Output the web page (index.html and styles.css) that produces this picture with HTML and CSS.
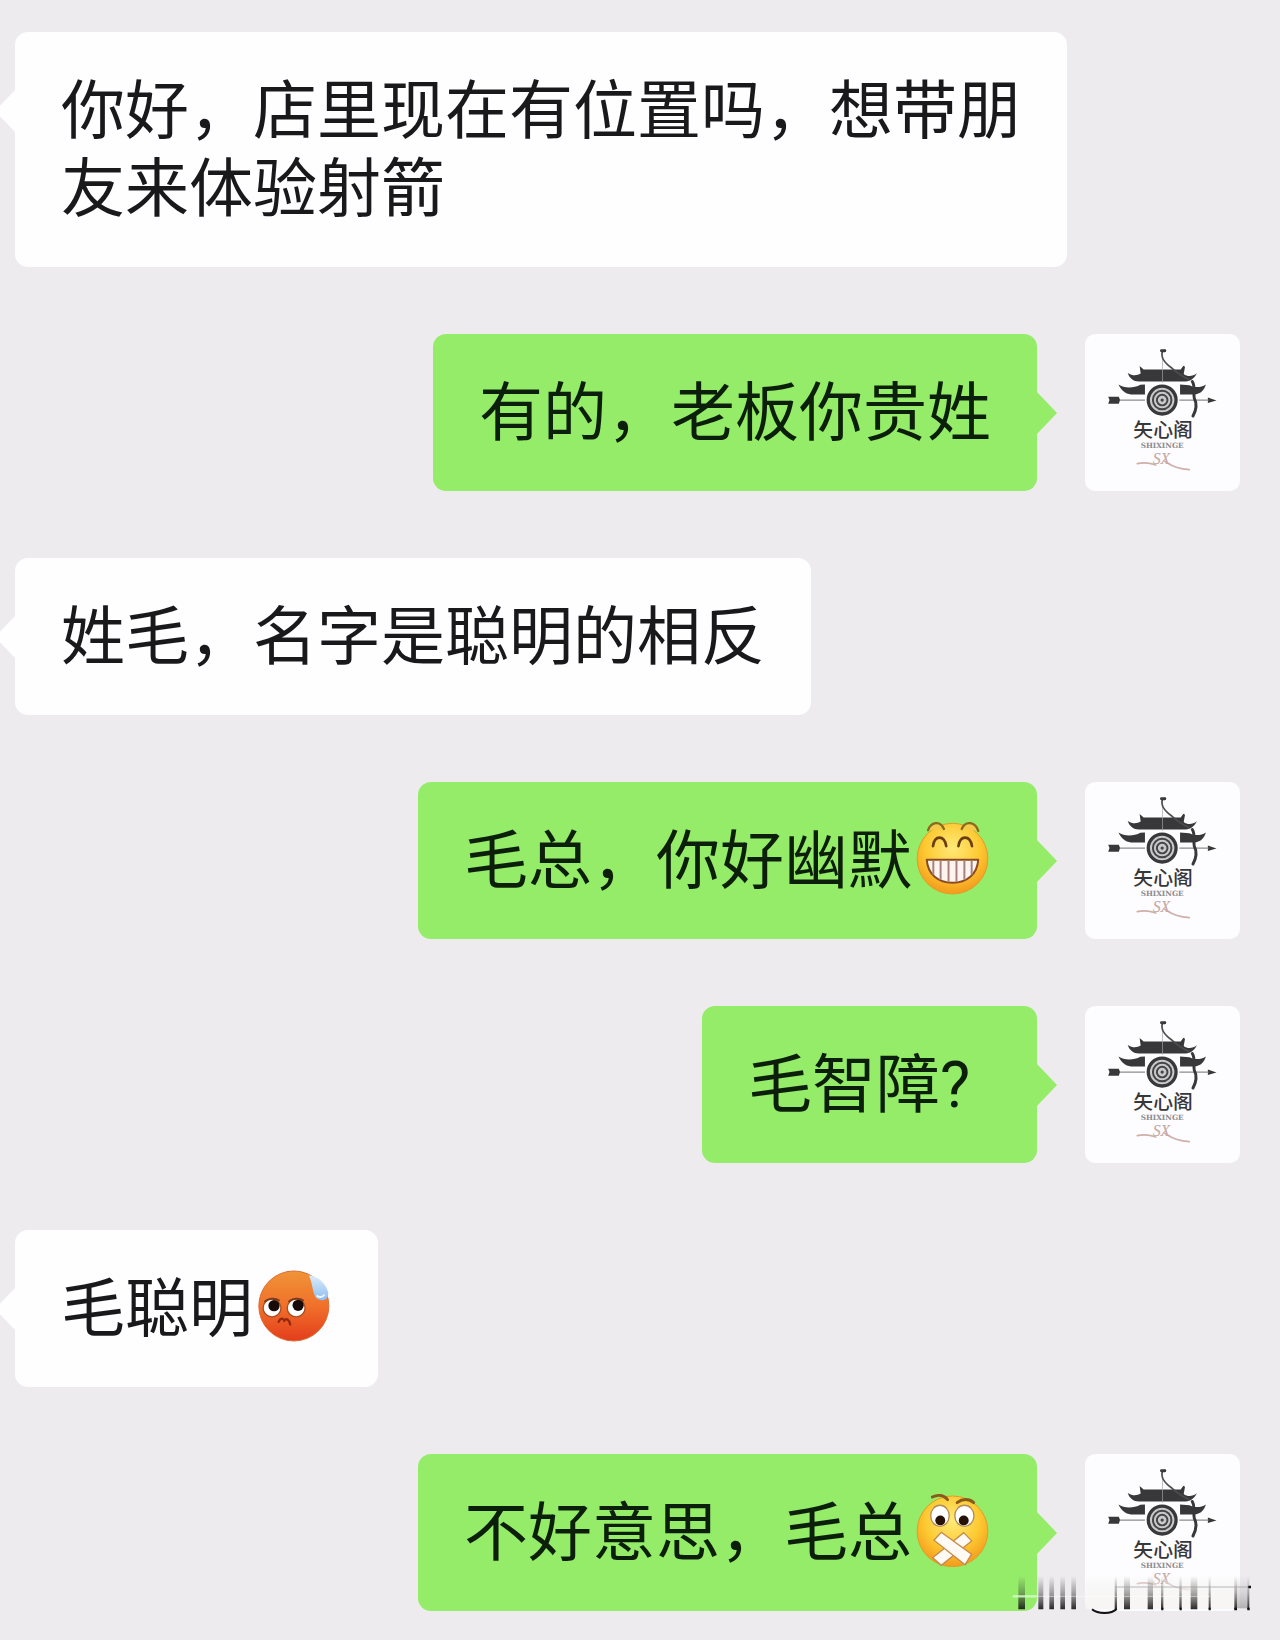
FILE: index.html
```html
<!DOCTYPE html>
<html lang="zh-CN">
<head>
<meta charset="utf-8">
<meta name="viewport" content="width=device-width, initial-scale=1">
<title>聊天</title>
<link rel="stylesheet" href="styles.css">
</head>
<body>
<svg class="defs" aria-hidden="true">
  <defs>
    <radialGradient id="yellow" cx="50%" cy="35%" r="65%">
      <stop offset="0" stop-color="#ffea78"/><stop offset=".6" stop-color="#fdc931"/><stop offset="1" stop-color="#f39a1c"/>
    </radialGradient>
    <linearGradient id="red" x1="0" y1="0" x2="0" y2="1">
      <stop offset="0" stop-color="#ef9438"/><stop offset=".5" stop-color="#f1702a"/><stop offset="1" stop-color="#e33d1c"/>
    </linearGradient>
    <linearGradient id="drop" x1="0" y1="0" x2="0" y2="1">
      <stop offset="0" stop-color="#dcecfa"/><stop offset="1" stop-color="#8dbdf0"/>
    </linearGradient>
    <linearGradient id="fade" x1="0" y1="0" x2="0" y2="1">
      <stop offset="0" stop-color="#333" stop-opacity="0"/><stop offset=".5" stop-color="#333" stop-opacity=".4"/><stop offset="1" stop-color="#111" stop-opacity=".9"/>
    </linearGradient>
    <linearGradient id="mist" x1="0" y1="0" x2="0" y2="1">
      <stop offset="0" stop-color="#f6f5f4" stop-opacity="0"/><stop offset=".4" stop-color="#f6f5f4" stop-opacity=".75"/><stop offset="1" stop-color="#f6f5f4" stop-opacity=".9"/>
    </linearGradient>
    <symbol id="emblem" viewBox="45 42 468 471">
      <g fill="#38373a">
        <path d="M210 137l12 11h112l8-12 5 3-4 22c12 10 28 7 40-2-8 16-20 24-34 25H208c-17-1-28-9-34-26 14 9 27 9 39 2z"/>
        <path d="M146 193c18 13 48 11 66 1l14-1v30h-42c-18-2-30-13-38-30zM410 193c-16 10-34 10-50 2l-28-2v30h45c18-2 28-14 33-30z"/>
        <path d="M115 230h32l4 10-4 11h-32l4-11zM416 232l26 9-26 8z"/>
      </g>
      <path d="M150 240h82M326 240h92" stroke="#8c8b8e" stroke-width="4"/>
      <path d="M279 90v104" stroke="#a6a5a8" stroke-width="2"/>
      <path d="M286 90c-8 0-10 8-8 18 2 15 16 26 30 36l22 18 28 16" fill="none" stroke="#4c4b4e" stroke-width="5" stroke-linecap="round"/>
      <path d="M276 91h10M369 184c10 16 2 32 6 50 8 16 7 34-4 54" fill="none" stroke="#38373a" stroke-width="9" stroke-linecap="round"/>
      <circle cx="278" cy="240" r="52" fill="#fff"/>
      <circle cx="278" cy="240" r="42" fill="#c9c8ca" stroke="#38373a" stroke-width="10"/>
      <circle cx="278" cy="240" r="28" fill="none" stroke="#454447" stroke-width="6"/>
      <circle cx="278" cy="240" r="16" fill="none" stroke="#454447" stroke-width="6"/>
      <circle cx="278" cy="240" r="5" fill="#454447"/>
      <path d="M203 432c22-5 38-2 56 4M282 424c14 2 18 22 78 26" fill="none" stroke="#cdb0a9" stroke-width="5" stroke-linecap="round"/>
    </symbol>
  </defs>
</svg>
<main class="chat">
  <section class="row">
    <p class="bubble theirs">你好，店里现在有位置吗，想带朋友来体验射箭</p>
  </section>
  <section class="row own">
    <p class="bubble mine">有的，老板你贵姓</p>
    <svg class="avatar" viewBox="45 42 468 471"><use href="#emblem" x="45" y="42" width="468" height="471"/><text class="brand" x="281" y="352">矢心阁</text><text class="latin" x="278" y="384">SHIXINGE</text><text class="script" x="276" y="434">SX</text></svg>
  </section>
  <section class="row">
    <p class="bubble theirs">姓毛，名字是聪明的相反</p>
  </section>
  <section class="row own">
    <p class="bubble mine">毛总，你好幽默<svg class="emoji" viewBox="46 68 220 224" role="img" aria-label="呲牙">
      <circle cx="156" cy="182" r="107" fill="url(#yellow)" stroke="#e69a25" stroke-width="3"/>
      <path d="M82 96c8-24 36-32 48-4M184 92c12-28 42-20 50 6" fill="#f5c94a" stroke="#8a6a1c" stroke-width="7" stroke-linecap="round"/>
      <path d="M97 144c5-34 34-34 40 0M174 144c5-34 35-34 41 0" fill="none" stroke="#6b3d12" stroke-width="8" stroke-linecap="round"/>
      <path d="M78 185h156c-3 45-35 70-78 70s-75-25-78-70z" fill="#fff4ef" stroke="#8d4a20" stroke-width="6" stroke-linejoin="round"/>
      <path d="M98 188v43M120 188v58M144 188v64M168 188v64M192 188v58M214 188v42" stroke="#a5827e" stroke-width="6"/>
    </svg></p>
    <svg class="avatar" viewBox="45 42 468 471"><use href="#emblem" x="45" y="42" width="468" height="471"/><text class="brand" x="281" y="352">矢心阁</text><text class="latin" x="278" y="384">SHIXINGE</text><text class="script" x="276" y="434">SX</text></svg>
  </section>
  <section class="row own">
    <p class="bubble mine">毛智障<span class="mark">?</span></p>
    <svg class="avatar" viewBox="45 42 468 471"><use href="#emblem" x="45" y="42" width="468" height="471"/><text class="brand" x="281" y="352">矢心阁</text><text class="latin" x="278" y="384">SHIXINGE</text><text class="script" x="276" y="434">SX</text></svg>
  </section>
  <section class="row">
    <p class="bubble theirs">毛聪明<svg class="emoji" viewBox="48 62 220 224" role="img" aria-label="囧">
      <circle cx="159" cy="174" r="106" fill="url(#red)" stroke="#dc6b30" stroke-width="3"/>
      <circle cx="93" cy="180" r="27" fill="#fff" stroke="#a84e22" stroke-width="4"/>
      <circle cx="166" cy="180" r="27" fill="#fff" stroke="#a84e22" stroke-width="4"/>
      <circle cx="99" cy="173" r="17" fill="#160b08"/><circle cx="172" cy="172" r="17" fill="#160b08"/>
      <path d="M70 162c10-12 32-14 46-4M143 162c10-12 32-14 46-4" fill="none" stroke="#7a3a1b" stroke-width="5"/>
      <path d="M113 222c6-13 13-12 17-4 6-8 14-4 18 12" fill="none" stroke="#942711" stroke-width="7" stroke-linecap="round"/>
      <path d="M205 82c26 2 50 22 58 50 2 18-10 27-24 24-24-4-18-34-34-74z" fill="url(#drop)"/>
      <path d="M228 142c8 8 18 6 24-3" fill="none" stroke="#e9f4ff" stroke-width="6"/>
    </svg></p>
  </section>
  <section class="row own">
    <p class="bubble mine">不好意思，毛总<svg class="emoji" viewBox="46 68 220 224" role="img" aria-label="闭嘴">
      <circle cx="156" cy="184" r="107" fill="url(#yellow)" stroke="#e69a25" stroke-width="3"/>
      <path d="M95 80c16-8 34-6 46 8M170 97c16-12 36-12 50 0" fill="none" stroke="#8b5a1b" stroke-width="9" stroke-linecap="round"/>
      <ellipse cx="118" cy="137" rx="28" ry="32" fill="#fff" stroke="#b48b55" stroke-width="4"/>
      <ellipse cx="192" cy="137" rx="29" ry="32" fill="#fff" stroke="#b48b55" stroke-width="4"/>
      <circle cx="119" cy="151" r="15" fill="#261108"/><circle cx="190" cy="151" r="15" fill="#261108"/>
      <path d="M190 188l24 25-92 74-26-23z" fill="#fffaf3" stroke="#c58a4a" stroke-width="4"/>
      <path d="M122 187l92 66-20 32-94-74z" fill="#fffaf3" stroke="#c58a4a" stroke-width="4"/>
    </svg></p>
    <svg class="avatar" viewBox="45 42 468 471"><use href="#emblem" x="45" y="42" width="468" height="471"/><text class="brand" x="281" y="352">矢心阁</text><text class="latin" x="278" y="384">SHIXINGE</text><text class="script" x="276" y="434">SX</text></svg>
    <svg class="stamp" viewBox="36 375 720 117" aria-hidden="true">
      <path d="M256 375h464v100H256z" fill="url(#mist)"/>
      <path d="M55 375h20v100H55zM115 375h15v100h-15zM148 375h14v100h-14zM181 375h14v100h-14zM214 375h14v100h-14zM344 375h7v100h-7zM372 375h18v100h-18zM443 375h16v100h-16zM483 375h7v100h-7zM538 375h7v100h-7zM572 375h20v100h-20zM626 375h6v100h-6zM703 375h8v100h-8zM742 375h6v100h-6z" fill="url(#fade)"/>
      <path d="M711 375h31v97h-31z" fill="url(#fade)" opacity=".3"/>
      <path d="M276 475c18 15 58 15 74-1" fill="none" stroke="#111" stroke-width="6"/>
      <path d="M345 408h405" stroke="#999" stroke-width="2"/>
      <path d="M110 436h520" stroke="#fff" stroke-width="3" opacity=".5"/>
      <path d="M38 436h72" stroke="#d9ffd0" stroke-width="7" opacity=".8"/>
      <path d="M484 470h6v8h-6zM539 470h6v8h-6zM626 470h6v8h-6zM703 470h8v8h-8zM742 470h7v8h-7zM745 404h8v8h-8z" fill="#111"/>
    </svg>
  </section>
</main>
</body>
</html>
```
FILE: styles.css
```css
* {
  box-sizing: border-box;
}

body {
  margin: 0;
  background: #edebee;
  color: #19191b;
  font-family: "Noto Sans CJK SC", sans-serif;
}

.defs {
  position: absolute;
  width: 0;
  height: 0;
}

.chat {
  display: flex;
  flex-direction: column;
  gap: 67px;
  padding: 32px 40px 30px 15px;
  overflow: hidden;
}

.row {
  position: relative;
  display: flex;
  align-items: flex-start;
  gap: 48px;
}

.own {
  justify-content: flex-end;
}

.bubble {
  position: relative;
  max-width: 1052px;
  margin: 0;
  padding: 34px 46px 45px;
  border-radius: 13px;
  font-size: 64px;
  line-height: 78px;
}

.bubble::after {
  content: "";
  position: absolute;
  top: 58px;
  width: 20px;
  height: 42px;
}

.theirs {
  background: #fefdff;
}

.theirs::after {
  right: 100%;
  background: #fefdff;
  clip-path: polygon(100% 0, 0 50%, 100% 100%);
}

.mine {
  background: #95ec69;
  color: #0b1f0a;
}

.mine::after {
  left: 100%;
  background: #95ec69;
  clip-path: polygon(0 0, 100% 50%, 0 100%);
}

.mark {
  display: inline-block;
  width: 51px;
  font-family: Roboto, sans-serif;
  line-height: 64px;
}

.emoji {
  width: 73px;
  height: 74px;
  margin: -24px 2px -8px 4px;
  vertical-align: middle;
}

.avatar {
  flex: none;
  width: 155px;
  height: 157px;
  border-radius: 10px;
  background: #fdfcfe;
}

.brand,
.latin,
.script {
  text-anchor: middle;
}

.brand {
  fill: #38373a;
  font-size: 60px;
  font-weight: 500;
}

.latin {
  fill: #8c8b8e;
  font-family: "DejaVu Serif", serif;
  font-size: 22px;
  font-weight: 700;
}

.script {
  fill: #c4a8a2;
  font-family: "Liberation Serif", serif;
  font-size: 48px;
  font-style: italic;
}

.stamp {
  position: absolute;
  right: -12px;
  bottom: -4px;
  width: 240px;
  height: 39px;
}
```
